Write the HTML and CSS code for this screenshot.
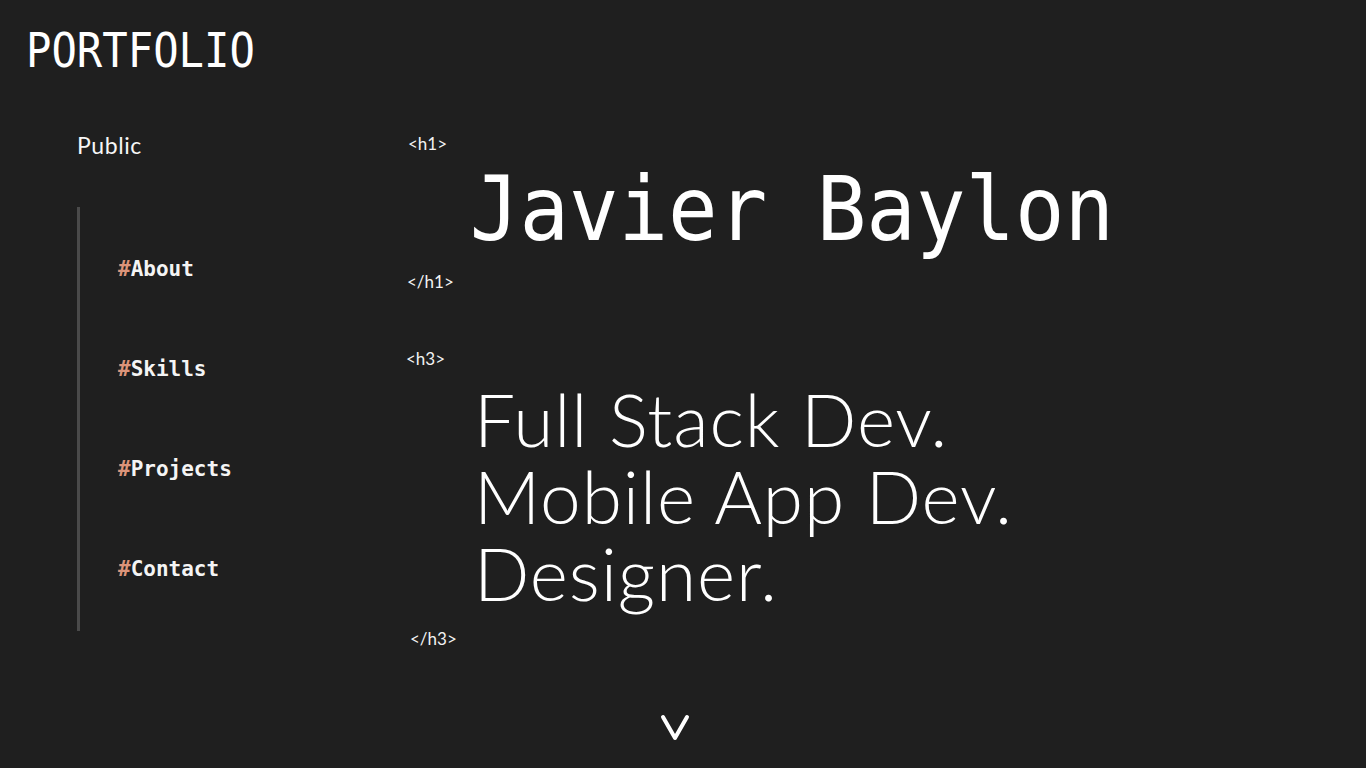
FILE: index.html
```html
<!DOCTYPE html>
<html lang="en">
<head>
<meta charset="utf-8">
<title>Portfolio</title>
<link rel="stylesheet" href="styles.css">
</head>
<body>
<header class="site-header">
  <div class="logo">PORTFOLIO</div>
</header>
<main class="main">
  <aside class="sidebar">
    <div class="sidebar-title">Public</div>
    <nav class="nav">
      <a class="nav-item" href="#about"><span class="hash">#</span>About</a>
      <a class="nav-item" href="#skills"><span class="hash">#</span>Skills</a>
      <a class="nav-item" href="#projects"><span class="hash">#</span>Projects</a>
      <a class="nav-item" href="#contact"><span class="hash">#</span>Contact</a>
    </nav>
  </aside>
  <section class="content">
    <div class="tag tag-h1-open">&lt;h1&gt;</div>
    <h1 class="name">Javier Baylon</h1>
    <div class="tag tag-h1-close">&lt;/h1&gt;</div>
    <div class="tag tag-h3-open">&lt;h3&gt;</div>
    <h3 class="roles">Full Stack Dev.<br>Mobile App Dev.<br>Designer.</h3>
    <div class="tag tag-h3-close">&lt;/h3&gt;</div>
  </section>
</main>
<footer class="scroll">
  <svg class="chevron" width="32" height="30" viewBox="0 0 32 30" aria-hidden="true">
    <polyline points="4,5 16,26 28,5" fill="none" stroke="#ffffff" stroke-width="4" stroke-linecap="round" stroke-linejoin="round"/>
  </svg>
</footer>
</body>
</html>
```

FILE: styles.css
```css
html, body {
  margin: 0;
  padding: 0;
  background: #1f1f1f;
  color: #ffffff;
  height: 100%;
  overflow: hidden;
}

body {
  font-family: "Lato", "Open Sans", sans-serif;
}

.site-header {
  padding: 22px 0 0 26px;
}

.logo {
  font-family: "DejaVu Sans Mono", monospace;
  font-size: 48px;
  line-height: 56px;
  color: #ffffff;
  transform: scaleX(0.88);
  transform-origin: left center;
  white-space: nowrap;
}

.main {
  display: flex;
  padding-top: 52px;
}

.sidebar {
  width: 329px;
  padding-left: 77px;
  flex-shrink: 0;
}

.sidebar-title {
  font-size: 23px;
  letter-spacing: 0.6px;
  line-height: 30px;
  color: #f6f6f6;
}

.nav {
  margin-top: 47px;
  border-left: 3px solid #4a4a4a;
  padding: 12px 0;
  display: flex;
  flex-direction: column;
}

.nav-item {
  display: block;
  height: 100px;
  line-height: 100px;
  padding-left: 38px;
  font-family: "DejaVu Sans Mono", monospace;
  font-size: 21px;
  font-weight: bold;
  color: #f4f4f4;
  text-decoration: none;
}

.hash {
  color: #dc9479;
}

.content {
  display: flex;
  flex-direction: column;
}

.tag {
  font-size: 17px;
  line-height: 28px;
  color: #f2f2f2;
}

.tag-h1-open { margin-left: 2px; }

.name {
  margin: 6px 0 0 0;
  padding-left: 69px;
  font-family: "DejaVu Sans Mono", monospace;
  font-weight: normal;
  font-size: 89px;
  line-height: 90px;
  white-space: nowrap;
  transform: scaleX(0.925);
  transform-origin: left center;
}

.tag-h1-close { margin-top: 14px; margin-left: 1px; }

.tag-h3-open { margin-top: 49px; }

.roles {
  margin: 8px 0 0 0;
  padding-left: 68px;
  font-weight: 300;
  font-size: 73px;
  line-height: 77px;
  letter-spacing: 0.9px;
  white-space: nowrap;
}

.tag-h3-close { margin-top: 13px; margin-left: 4px; }

.scroll {
  display: flex;
  justify-content: center;
  padding-right: 16px;
  margin-top: 59px;
}

.chevron {
  display: block;
}
```
